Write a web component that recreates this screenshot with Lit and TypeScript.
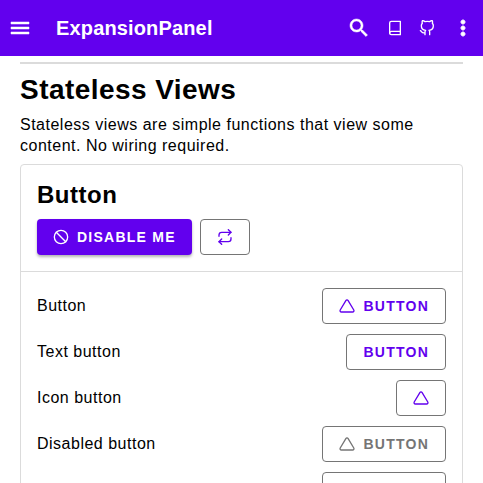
import { LitElement, html, css, svg, nothing } from "lit";
import { customElement } from "lit/decorators.js";
import { classMap } from "lit/directives/class-map.js";

const shapes = {
  menu: svg`<path d="M3 18h18v-2H3v2zm0-5h18v-2H3v2zm0-7v2h18V6H3z"/>`,
  search: svg`<path d="M15.5 14h-.79l-.28-.27C15.41 12.59 16 11.11 16 9.5 16 5.91 13.09 3 9.5 3S3 5.91 3 9.5 5.91 16 9.5 16c1.61 0 3.09-.59 4.23-1.57l.27.28v.79l5 4.99L20.49 19l-4.99-5zm-6 0C7.01 14 5 11.99 5 9.5S7.01 5 9.5 5 14 7.01 14 9.5 11.99 14 9.5 14z"/>`,
  more: svg`<path d="M12 8c1.1 0 2-.9 2-2s-.9-2-2-2-2 .9-2 2 .9 2 2 2zm0 2c-1.1 0-2 .9-2 2s.9 2 2 2 2-.9 2-2-.9-2-2-2zm0 6c-1.1 0-2 .9-2 2s.9 2 2 2 2-.9 2-2-.9-2-2-2z"/>`,
  book: svg`<path d="M4 19.5A2.5 2.5 0 0 1 6.5 17H20"/><path d="M6.5 2H20v20H6.5A2.5 2.5 0 0 1 4 19.5v-15A2.5 2.5 0 0 1 6.5 2z"/>`,
  github: svg`<path d="M9 19c-5 1.5-5-2.5-7-3m14 6v-3.87a3.37 3.37 0 0 0-.94-2.61c3.14-.35 6.44-1.54 6.44-7A5.44 5.44 0 0 0 20 4.77 5.07 5.07 0 0 0 19.91 1S18.73.65 16 2.48a13.38 13.38 0 0 0-7 0C6.27.65 5.09 1 5.09 1A5.07 5.07 0 0 0 5 4.77a5.44 5.44 0 0 0-1.5 3.78c0 5.42 3.3 6.61 6.44 7A3.37 3.37 0 0 0 9 18.13V22"/>`,
  slash: svg`<circle cx="12" cy="12" r="10"/><path d="M4.93 4.93l14.14 14.14"/>`,
  repeat: svg`<path d="M17 1l4 4-4 4"/><path d="M3 11V9a4 4 0 0 1 4-4h14"/><path d="M7 23l-4-4 4-4"/><path d="M21 13v2a4 4 0 0 1-4 4H3"/>`,
  triangle: svg`<path d="M10.29 3.86L1.82 18a2 2 0 0 0 1.71 3h16.94a2 2 0 0 0 1.71-3L13.71 3.86a2 2 0 0 0-3.42 0z"/>`,
};
type Shape = keyof typeof shapes;

const filled = (name: Shape) =>
  html`<svg class="filled" viewBox="0 0 24 24">${shapes[name]}</svg>`;
const outline = (name: Shape) =>
  html`<svg class="outline" viewBox="0 0 24 24">${shapes[name]}</svg>`;

interface Row {
  label: string;
  icon?: Shape;
  text?: string;
  disabled?: boolean;
}

const rows: Row[] = [
  { label: "Button", icon: "triangle", text: "Button" },
  { label: "Text button", text: "Button" },
  { label: "Icon button", icon: "triangle" },
  { label: "Disabled button", icon: "triangle", text: "Button", disabled: true },
];

@customElement("app-root")
export class AppRoot extends LitElement {
  static styles = css`
    :host {
      display: flex;
      flex-direction: column;
      height: 100vh;
      overflow: hidden;
      background: #fff;
      color: #000;
      font: 16px/21px "Liberation Sans", Arial, sans-serif;
      letter-spacing: 0.5px;
    }
    svg {
      display: block;
      flex: none;
    }
    .filled {
      width: 24px;
      height: 24px;
      fill: currentColor;
      stroke: currentColor;
      stroke-width: 0.5;
    }
    .outline {
      width: 16px;
      height: 16px;
      fill: none;
      stroke: currentColor;
      stroke-width: 2;
      stroke-linecap: round;
      stroke-linejoin: round;
    }
    header {
      flex: none;
      display: flex;
      align-items: center;
      height: 56px;
      box-sizing: border-box;
      padding: 0 8px;
      background: #6200ee;
      color: #fff;
    }
    .title {
      flex: 1;
      margin-left: 24px;
      font-size: 20px;
      font-weight: 700;
      line-height: 32px;
      letter-spacing: 0.15px;
    }
    .actions {
      display: flex;
      align-items: center;
      gap: 16px;
    }
    .actions .filled:last-child {
      stroke-width: 1;
    }
    main {
      flex: 1;
      min-height: 0;
      overflow: hidden;
      padding: 6px 20px 0;
    }
    .rule {
      height: 2px;
      background: #dbdbdb;
    }
    h1,
    h2,
    p {
      margin: 0;
    }
    h1 {
      margin-top: 9px;
      font-size: 28px;
      line-height: 34px;
      letter-spacing: 0.45px;
    }
    p {
      margin-top: 7px;
    }
    .card {
      margin-top: 8px;
      border: 1px solid #dbdbdb;
      border-radius: 4px;
    }
    .head {
      padding: 16px;
      border-bottom: 1px solid #dbdbdb;
    }
    h2 {
      font-size: 24px;
      line-height: 28px;
    }
    .tools {
      display: flex;
      gap: 8px;
      margin-top: 10px;
    }
    .list {
      display: flex;
      flex-direction: column;
      gap: 10px;
      padding: 16px;
    }
    .row {
      display: flex;
      align-items: center;
      justify-content: space-between;
    }
    .label {
      padding-bottom: 2px;
    }
    .btn {
      display: flex;
      align-items: center;
      gap: 8px;
      height: 36px;
      box-sizing: border-box;
      padding: 0 16px;
      border: 1px solid #757575;
      border-radius: 4px;
      background: #fff;
      color: #6200ee;
      font: 700 14px/20px "Liberation Sans", Arial, sans-serif;
      letter-spacing: 1.25px;
      text-transform: uppercase;
    }
    .raised {
      border: none;
      background: #6200ee;
      color: #fff;
      box-shadow: 0 2px 3px rgba(0, 0, 0, 0.3);
    }
    .disabled {
      color: #757575;
    }
    .blank {
      width: 124px;
      margin-left: auto;
    }
  `;

  private row({ label, icon, text, disabled = false }: Row) {
    return html`<div class="row">
      <span class="label">${label}</span>
      <button class=${classMap({ btn: true, disabled })} ?disabled=${disabled}>
        ${icon ? outline(icon) : nothing}${text ? html`<span>${text}</span>` : nothing}
      </button>
    </div>`;
  }

  render() {
    return html`
      <header>
        ${filled("menu")}
        <div class="title">ExpansionPanel</div>
        <div class="actions">
          ${filled("search")}${outline("book")}${outline("github")}${filled("more")}
        </div>
      </header>
      <main>
        <div class="rule"></div>
        <h1>Stateless Views</h1>
        <p>Stateless views are simple functions that view some content. No wiring required.</p>
        <section class="card">
          <div class="head">
            <h2>Button</h2>
            <div class="tools">
              <button class="btn raised">${outline("slash")}<span>Disable me</span></button>
              <button class="btn">${outline("repeat")}</button>
            </div>
          </div>
          <div class="list">
            ${rows.map((r) => this.row(r))}
            <div class="row"><button class="btn blank"></button></div>
          </div>
        </section>
      </main>
    `;
  }
}
